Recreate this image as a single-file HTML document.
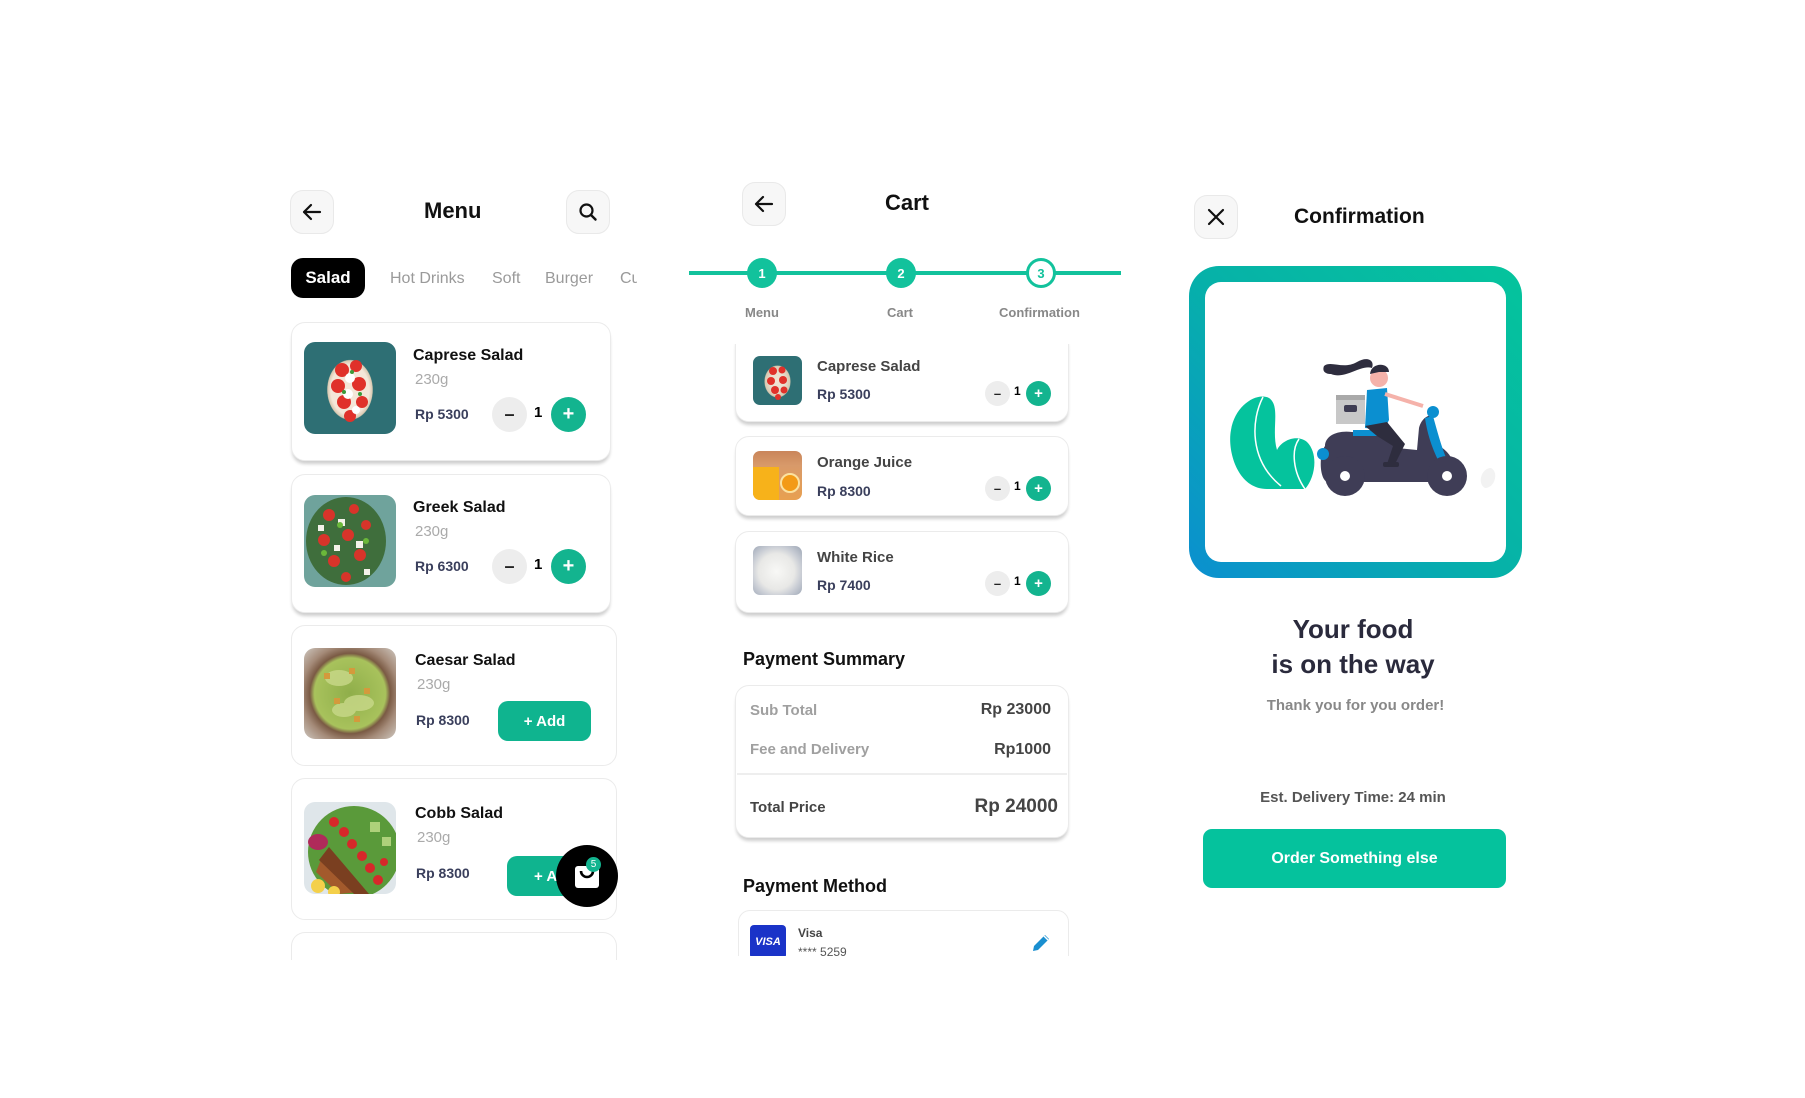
<!DOCTYPE html>
<html><head><meta charset="utf-8"><style>
*{margin:0;padding:0;box-sizing:border-box}
body{width:1805px;height:1098px;background:#fff;font-family:"Liberation Sans",Arial,sans-serif;position:relative;overflow:hidden}
.a{position:absolute}
.btn{position:absolute;width:44px;height:44px;border-radius:13px;background:#f7f7f7;border:1px solid #e9e9e9;display:flex;align-items:center;justify-content:center}
.t{position:absolute;white-space:nowrap;line-height:1}
.card{position:absolute;background:#fff;border:1.5px solid #ebebeb;border-radius:14px}
.sh{box-shadow:0 4px 3px -1px #cfcfcf}
.img{position:absolute;border-radius:11px;overflow:hidden}
.nm{font-weight:bold;font-size:16px;color:#111}
.wt{font-size:15px;color:#aaa}
.pr{font-weight:bold;font-size:14px;color:#3a3f5c}
.c{position:absolute;border-radius:50%;display:flex;align-items:center;justify-content:center;font-weight:bold}
.mi{background:#ededed;color:#222}
.pl{background:#13b48f;color:#fff}
.add{position:absolute;background:#0fb48f;color:#fff;border-radius:10px;font-weight:bold;font-size:15px;display:flex;align-items:center;justify-content:center}
.tab{font-size:16px;color:#9a9a9a}
</style></head><body>

<!-- ===== MENU ===== -->
<div class="btn" style="left:290px;top:190px"><svg width="22" height="22" viewBox="0 0 22 22"><path d="M19 11H3M10 4L3 11l7 7" fill="none" stroke="#111" stroke-width="2.2" stroke-linecap="round" stroke-linejoin="round"/></svg></div>
<div class="t" style="left:424px;top:200px;font-size:22px;font-weight:bold;color:#111">Menu</div>
<div class="btn" style="left:566px;top:190px"><svg width="22" height="22" viewBox="0 0 22 22"><circle cx="9.5" cy="9.5" r="6" fill="none" stroke="#111" stroke-width="2.2"/><path d="M14 14l4.5 4.5" stroke="#111" stroke-width="2.4" stroke-linecap="round"/></svg></div>
<div class="a" style="left:291px;top:258px;width:74px;height:40px;background:#000;border-radius:12px;color:#fff;font-weight:bold;font-size:17px;display:flex;align-items:center;justify-content:center">Salad</div>
<div class="a" style="left:340px;top:270px;width:297px;height:20px;overflow:hidden">
<span class="t tab" style="left:50px;top:1px">Hot Drinks</span>
<span class="t tab" style="left:152px;top:1px">Soft</span>
<span class="t tab" style="left:205px;top:1px">Burger</span>
<span class="t tab" style="left:280px;top:1px">Cu</span>
</div>

<!-- card1 -->
<div class="card sh" style="left:291px;top:322px;width:320px;height:139px"></div>
<div class="img" style="left:304px;top:342px;width:92px;height:92px;background:radial-gradient(ellipse 32px 42px at 50% 52%,#f4e6d8 0,#f4e6d8 60%,#d8c8b0 70%,transparent 72%),#2e6f74">
<svg width="92" height="92" style="position:absolute;left:0;top:0"><g fill="#e0312a"><circle cx="38" cy="28" r="7"/><circle cx="52" cy="24" r="6"/><circle cx="34" cy="44" r="7"/><circle cx="55" cy="42" r="7"/><circle cx="40" cy="60" r="7"/><circle cx="58" cy="60" r="6"/><circle cx="46" cy="74" r="6"/></g><g fill="#fff"><circle cx="46" cy="36" r="5"/><circle cx="44" cy="52" r="5"/><circle cx="52" cy="68" r="4"/></g><g fill="#3c9a3a"><circle cx="48" cy="30" r="2"/><circle cx="40" cy="50" r="2"/><circle cx="56" cy="52" r="2"/></g></svg></div>
<div class="t nm" style="left:413px;top:348px">Caprese Salad</div>
<div class="t wt" style="left:415px;top:372px">230g</div>
<div class="t pr" style="left:415px;top:407px">Rp 5300</div>
<div class="c mi" style="left:492px;top:397px;width:35px;height:35px;font-size:18px">–</div>
<div class="t" style="left:534px;top:405px;font-size:15px;font-weight:bold">1</div>
<div class="c pl" style="left:551px;top:397px;width:35px;height:35px;font-size:20px">+</div>

<!-- card2 -->
<div class="card sh" style="left:291px;top:474px;width:320px;height:139px"></div>
<div class="img" style="left:304px;top:495px;width:92px;height:92px;background:#6fa39c">
<svg width="92" height="92" style="position:absolute;left:0;top:0"><ellipse cx="42" cy="46" rx="40" ry="44" fill="#3f6e3c"/><g fill="#d8342a"><circle cx="25" cy="20" r="6"/><circle cx="50" cy="14" r="5"/><circle cx="20" cy="45" r="6"/><circle cx="44" cy="40" r="6"/><circle cx="62" cy="30" r="5"/><circle cx="30" cy="66" r="6"/><circle cx="56" cy="60" r="6"/><circle cx="42" cy="82" r="5"/></g><g fill="#f4f2ea"><rect x="34" y="24" width="7" height="7"/><rect x="14" y="30" width="6" height="6"/><rect x="52" y="46" width="7" height="7"/><rect x="30" y="50" width="6" height="6"/><rect x="60" y="74" width="6" height="6"/></g><g fill="#6bb83a"><circle cx="36" cy="30" r="3"/><circle cx="62" cy="46" r="3"/><circle cx="20" cy="58" r="3"/></g></svg></div>
<div class="t nm" style="left:413px;top:500px">Greek Salad</div>
<div class="t wt" style="left:415px;top:524px">230g</div>
<div class="t pr" style="left:415px;top:559px">Rp 6300</div>
<div class="c mi" style="left:492px;top:549px;width:35px;height:35px;font-size:18px">–</div>
<div class="t" style="left:534px;top:557px;font-size:15px;font-weight:bold">1</div>
<div class="c pl" style="left:551px;top:549px;width:35px;height:35px;font-size:20px">+</div>

<!-- card3 -->
<div class="card" style="left:291px;top:625px;width:326px;height:141px"></div>
<div class="img" style="left:304px;top:648px;width:92px;height:91px;background:radial-gradient(circle at 50% 50%,#8fae4a 0,#a8c25c 55%,#7a5a44 62%,#a48a78 75%,#cfc8c0 100%)">
<svg width="92" height="91" style="position:absolute;left:0;top:0"><g fill="#c9d98a" opacity=".8"><ellipse cx="35" cy="30" rx="14" ry="8"/><ellipse cx="55" cy="55" rx="15" ry="8"/><ellipse cx="40" cy="62" rx="12" ry="7"/></g><g fill="#d49a3c"><rect x="20" y="25" width="6" height="6"/><rect x="45" y="20" width="6" height="6"/><rect x="60" y="40" width="6" height="6"/><rect x="30" y="50" width="6" height="6"/><rect x="50" y="68" width="6" height="6"/></g></svg></div>
<div class="t nm" style="left:415px;top:653px">Caesar Salad</div>
<div class="t wt" style="left:417px;top:677px">230g</div>
<div class="t pr" style="left:416px;top:713px">Rp 8300</div>
<div class="add" style="left:498px;top:701px;width:93px;height:40px">+ Add</div>

<!-- card4 -->
<div class="card" style="left:291px;top:778px;width:326px;height:142px"></div>
<div class="img" style="left:304px;top:802px;width:92px;height:92px;background:#dfe6ea">
<svg width="92" height="92" style="position:absolute;left:0;top:0"><ellipse cx="50" cy="50" rx="46" ry="46" fill="#5a9a3a"/><g fill="#d6282a"><circle cx="30" cy="20" r="5"/><circle cx="40" cy="30" r="5"/><circle cx="48" cy="42" r="5"/><circle cx="58" cy="54" r="5"/><circle cx="66" cy="66" r="5"/><circle cx="74" cy="78" r="5"/><circle cx="80" cy="60" r="4"/></g><path d="M18 55 L55 90 L35 92 L12 70Z" fill="#a35a2c"/><path d="M25 45 L65 92 L50 92 L15 58Z" fill="#7a3f20"/><g fill="#f4d04a"><circle cx="14" cy="84" r="7"/><circle cx="30" cy="90" r="6"/></g><g fill="#b02a5a"><ellipse cx="14" cy="40" rx="10" ry="8"/></g><g fill="#aed17a"><rect x="66" y="20" width="10" height="10"/><rect x="78" y="35" width="9" height="9"/></g></svg></div>
<div class="t nm" style="left:415px;top:806px">Cobb Salad</div>
<div class="t wt" style="left:417px;top:830px">230g</div>
<div class="t pr" style="left:416px;top:866px">Rp 8300</div>
<div class="add" style="left:507px;top:856px;width:90px;height:40px;justify-content:flex-start;padding-left:27px">+ A</div>
<div class="c" style="left:556px;top:845px;width:62px;height:62px;background:#000"><svg width="28" height="28" viewBox="0 0 28 28"><rect x="2" y="4" width="24" height="22" rx="3" fill="#fff"/><path d="M8 9a6 6 0 0 0 12 0" fill="none" stroke="#000" stroke-width="2.6"/></svg></div>
<div class="c" style="left:586px;top:857px;width:15px;height:15px;background:#13b48f;color:#fff;font-size:10px;font-weight:normal">5</div>

<!-- card5 -->
<div class="card" style="left:291px;top:932px;width:326px;height:60px;border-bottom:none;border-radius:14px 14px 0 0"></div>
<div class="a" style="left:250px;top:960px;width:400px;height:60px;background:#fff"></div>

<!-- ===== CART ===== -->
<div class="btn" style="left:742px;top:182px"><svg width="22" height="22" viewBox="0 0 22 22"><path d="M19 11H3M10 4L3 11l7 7" fill="none" stroke="#111" stroke-width="2.2" stroke-linecap="round" stroke-linejoin="round"/></svg></div>
<div class="t" style="left:885px;top:192px;font-size:22px;font-weight:bold;color:#111">Cart</div>
<div class="a" style="left:689px;top:271px;width:432px;height:4px;background:#12c29c"></div>
<div class="c" style="left:747px;top:258px;width:30px;height:30px;background:#12c29c;color:#fff;font-size:13px">1</div>
<div class="c" style="left:886px;top:258px;width:30px;height:30px;background:#12c29c;color:#fff;font-size:13px">2</div>
<div class="c" style="left:1026px;top:258px;width:30px;height:30px;background:#fff;border:3px solid #12c29c;color:#12c29c;font-size:13px">3</div>
<div class="t" style="left:745px;top:306px;font-size:13px;font-weight:bold;color:#888">Menu</div>
<div class="t" style="left:887px;top:306px;font-size:13px;font-weight:bold;color:#888">Cart</div>
<div class="t" style="left:999px;top:306px;font-size:13px;font-weight:bold;color:#888">Confirmation</div>

<div class="card sh" style="left:735px;top:330px;width:334px;height:92px"></div>
<div class="a" style="left:730px;top:320px;width:345px;height:24px;background:#fff"></div>
<div class="card sh" style="left:735px;top:436px;width:334px;height:80px"></div>
<div class="card sh" style="left:735px;top:531px;width:334px;height:82px"></div>

<div class="img" style="left:753px;top:356px;width:49px;height:49px;border-radius:7px;background:radial-gradient(ellipse 18px 22px at 50% 52%,#f3e3d3 0,#e8e0d0 40%,#d8c8b0 70%,transparent 74%),#2e6f74">
<svg width="49" height="49" style="position:absolute;left:0;top:0"><g fill="#e0312a"><circle cx="20" cy="15" r="4"/><circle cx="29" cy="14" r="3.5"/><circle cx="18" cy="25" r="4"/><circle cx="30" cy="24" r="4"/><circle cx="22" cy="34" r="4"/><circle cx="31" cy="34" r="3.5"/><circle cx="25" cy="41" r="3"/></g></svg></div>
<div class="t" style="left:817px;top:359px;font-size:15px;font-weight:bold;color:#444">Caprese Salad</div>
<div class="t pr" style="left:817px;top:387px;font-size:14px">Rp 5300</div>
<div class="c mi" style="left:985px;top:381px;width:25px;height:25px;font-size:13px">–</div>
<div class="t" style="left:1014px;top:385px;font-size:12px;font-weight:bold">1</div>
<div class="c pl" style="left:1026px;top:381px;width:25px;height:25px;font-size:15px">+</div>

<div class="img" style="left:753px;top:451px;width:49px;height:49px;border-radius:7px;background:linear-gradient(180deg,#c9855a 0,#d89a6a 30%,#e8a050 100%)">
<div class="a" style="left:0;top:16px;width:26px;height:33px;background:#f7b21a"></div><div class="a" style="left:27px;top:22px;width:20px;height:20px;border-radius:50%;background:#f39a16;border:2px solid #fbe2a0"></div></div>
<div class="t" style="left:817px;top:455px;font-size:15px;font-weight:bold;color:#444">Orange Juice</div>
<div class="t pr" style="left:817px;top:484px;font-size:14px">Rp 8300</div>
<div class="c mi" style="left:985px;top:476px;width:25px;height:25px;font-size:13px">–</div>
<div class="t" style="left:1014px;top:480px;font-size:12px;font-weight:bold">1</div>
<div class="c pl" style="left:1026px;top:476px;width:25px;height:25px;font-size:15px">+</div>

<div class="img" style="left:753px;top:546px;width:49px;height:49px;border-radius:7px;background:radial-gradient(circle at 48% 52%,#f8f8f6 0,#e8e8e6 50%,#c8ccd4 70%,#9aa4b4 100%)"></div>
<div class="t" style="left:817px;top:550px;font-size:15px;font-weight:bold;color:#444">White Rice</div>
<div class="t pr" style="left:817px;top:578px;font-size:14px">Rp 7400</div>
<div class="c mi" style="left:985px;top:571px;width:25px;height:25px;font-size:13px">–</div>
<div class="t" style="left:1014px;top:575px;font-size:12px;font-weight:bold">1</div>
<div class="c pl" style="left:1026px;top:571px;width:25px;height:25px;font-size:15px">+</div>

<div class="t" style="left:743px;top:650px;font-size:18px;font-weight:bold;color:#111">Payment Summary</div>
<div class="card sh" style="left:735px;top:685px;width:334px;height:153px"></div>
<div class="t" style="left:750px;top:703px;font-size:15px;font-weight:bold;color:#a0a0a0">Sub Total</div>
<div class="t" style="left:960px;top:702px;width:91px;text-align:right;font-size:16px;font-weight:bold;color:#444">Rp 23000</div>
<div class="t" style="left:750px;top:742px;font-size:15px;font-weight:bold;color:#a0a0a0">Fee and Delivery</div>
<div class="t" style="left:960px;top:742px;width:91px;text-align:right;font-size:16px;font-weight:bold;color:#444">Rp1000</div>
<div class="a" style="left:737px;top:773px;width:330px;height:2px;background:#eeeeee"></div>
<div class="t" style="left:750px;top:800px;font-size:15px;font-weight:bold;color:#444">Total Price</div>
<div class="t" style="left:940px;top:797px;width:118px;text-align:right;font-size:19px;font-weight:bold;color:#444">Rp 24000</div>

<div class="t" style="left:743px;top:877px;font-size:18px;font-weight:bold;color:#111">Payment Method</div>
<div class="card" style="left:738px;top:910px;width:331px;height:60px;border-radius:12px 12px 0 0"></div>
<div class="a" style="left:750px;top:925px;width:36px;height:34px;background:#1a33c8;border-radius:4px;color:#fff;font-weight:bold;font-style:italic;font-size:11px;display:flex;align-items:center;justify-content:center">VISA</div>
<div class="t" style="left:798px;top:927px;font-size:12px;font-weight:bold;color:#444">Visa</div>
<div class="t" style="left:798px;top:946px;font-size:12px;color:#555">**** 5259</div>
<svg class="a" style="left:1030px;top:932px" width="22" height="22" viewBox="0 0 22 22"><path d="M3 19l1-5L15 3l4 4L8 18z" fill="#1a8fd0"/><path d="M14 4l4 4" stroke="#fff" stroke-width="1.5"/></svg>
<div class="a" style="left:700px;top:956px;width:420px;height:80px;background:#fff"></div>

<!-- ===== CONFIRMATION ===== -->
<div class="btn" style="left:1194px;top:195px"><svg width="22" height="22" viewBox="0 0 22 22"><path d="M4 4l14 14M18 4L4 18" stroke="#111" stroke-width="2.2" stroke-linecap="round"/></svg></div>
<div class="t" style="left:1294px;top:206px;font-size:21px;font-weight:bold;color:#111">Confirmation</div>
<div class="a" style="left:1189px;top:266px;width:333px;height:312px;border-radius:30px;background:linear-gradient(225deg,#05c49c 0%,#06b2a8 50%,#0b8fd0 100%);padding:16px"><div style="width:100%;height:100%;background:#fff;border-radius:16px"></div></div>
<svg class="a" style="left:1227px;top:350px" width="280" height="150" viewBox="0 0 280 150">
<!-- plant -->
<path d="M40 139 C10 139 0 100 4 80 C8 55 30 42 42 48 C54 56 44 80 50 100 C55 90 70 84 80 92 C92 104 88 128 78 139Z" fill="#05c39d"/>
<path d="M36 47 C24 70 22 110 54 136 M72 89 C64 100 66 122 78 139" stroke="#fff" stroke-width="1.5" fill="none"/>
<!-- hair -->
<path d="M97 16 C104 10 116 20 130 12 C140 6 148 10 145 18 C134 14 118 30 104 24 C98 24 95 21 97 16Z" fill="#2e2d3e"/>
<circle cx="152" cy="28" r="9" fill="#f5b2aa"/><path d="M143 24 C144 12 162 12 162 22 L152 22Z" fill="#2e2d3e"/>
<!-- box -->
<rect x="109" y="45" width="29" height="29" fill="#c8c8c8"/><rect x="109" y="45" width="29" height="5" fill="#a9a9a9"/><rect x="117" y="55" width="13" height="7" rx="2" fill="#3e3c52"/>
<!-- torso -->
<path d="M140 40 L160 38 L162 70 L157 80 L138 78Z" fill="#0b8fd0"/>
<path d="M158 44 L196 56" stroke="#f5b2aa" stroke-width="4"/>
<!-- scooter body -->
<path d="M98 96 C98 86 110 80 125 82 L150 84 L170 98 L190 100 L192 78 C194 70 200 64 206 66 L212 96 C220 100 226 108 228 118 L238 118 C242 124 238 132 230 132 L100 132 C92 128 92 104 98 96Z" fill="#3f3d56"/>
<path d="M198 68 C200 82 204 96 212 112 L220 110 C214 96 210 80 206 66Z" fill="#0b8fd0"/>
<circle cx="206" cy="62" r="6" fill="#0b8fd0"/><circle cx="96" cy="104" r="6" fill="#0b8fd0"/>
<rect x="126" y="80" width="30" height="6" fill="#0b8fd0"/>
<!-- legs -->
<path d="M138 76 L160 72 L178 94 L168 114 L160 114 L166 96 L150 86Z" fill="#2e2d3e"/>
<rect x="156" y="112" width="16" height="5" rx="2" fill="#2e2d3e"/>
<circle cx="118" cy="126" r="20" fill="#3f3d56"/><circle cx="118" cy="126" r="5" fill="#fff"/>
<circle cx="220" cy="126" r="20" fill="#3f3d56"/><circle cx="220" cy="126" r="5" fill="#fff"/>
<path d="M258 138 C250 134 254 118 264 118 C272 122 268 138 258 138Z" fill="#f2f2f2"/>
</svg>
<div class="t" style="left:1180px;top:612px;width:346px;text-align:center;font-size:26px;font-weight:bold;color:#2a2a3c;line-height:35px">Your food<br>is on the way</div>
<div class="t" style="left:1180px;top:698px;width:351px;text-align:center;font-size:15px;font-weight:bold;color:#888">Thank you for you order!</div>
<div class="t" style="left:1180px;top:790px;width:346px;text-align:center;font-size:15px;font-weight:bold;color:#555">Est. Delivery Time: 24 min</div>
<div class="a" style="left:1203px;top:829px;width:303px;height:59px;border-radius:9px;background:#05c29d;color:#fff;font-size:16px;font-weight:bold;display:flex;align-items:center;justify-content:center">Order Something else</div>
</body></html>
